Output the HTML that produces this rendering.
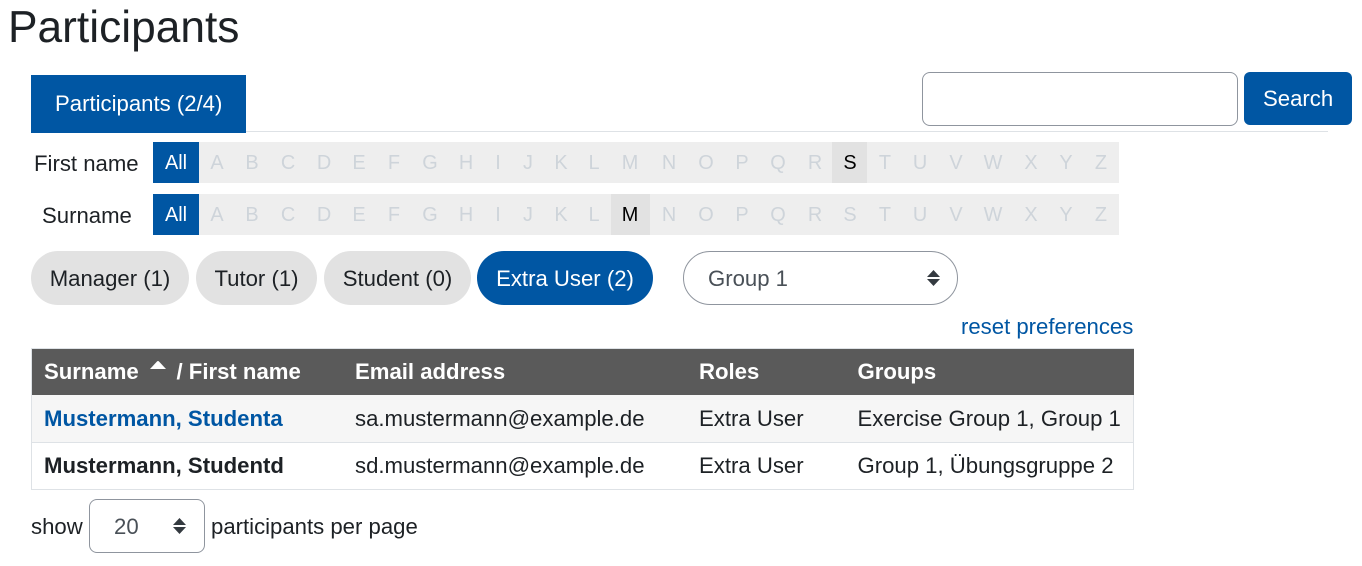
<!DOCTYPE html>
<html><head><meta charset="utf-8"><title>Participants</title>
<style>
html,body{margin:0;padding:0;background:#fff}
body{width:1362px;height:566px;position:relative;overflow:hidden;font-family:"Liberation Sans",Arial,sans-serif;font-size:22.15px;color:#1d2125}
.a{position:absolute;white-space:nowrap;line-height:24px}
.box{position:absolute;box-sizing:border-box}
.l{position:absolute;transform:translateX(-50%);font-size:19.9px;line-height:43px;color:#ced4da}
.pill{position:absolute;top:251px;height:54px;border-radius:27px;background:#e2e2e2;color:#1d2125;line-height:56px;text-align:center}
.th{font-weight:bold;color:#fff}
</style></head><body>
<div class="a" style="left:8px;top:4px;font-size:44.3px;line-height:48px">Participants</div>

<div class="box" style="left:31px;top:131px;width:1297px;height:1px;background:#dee2e6"></div>
<div class="box" style="left:31px;top:75px;width:215px;height:58px;background:#0056a3"></div>
<div class="a" style="left:55px;top:92px;color:#fff">Participants (2/4)</div>

<div class="box" style="left:922px;top:72px;width:316px;height:54px;border:1px solid #8f959e;border-radius:8px;background:#fff"></div>
<div class="box" style="left:1244px;top:72px;width:108px;height:53px;background:#0056a3;border-radius:6px"></div>
<div class="a" style="left:1263px;top:87px;color:#fff">Search</div>

<div class="a" style="left:34px;top:152px">First name</div>
<div class="a" style="left:42px;top:204px">Surname</div>

<div class="box" style="left:153px;top:142px;width:966px;height:41px;background:#eee"></div>
<div class="box" style="left:153px;top:142px;width:46px;height:41px;background:#0056a3"></div>
<div class="box" style="left:832px;top:142px;width:35px;height:41px;background:#e2e2e2"></div>
<div class="box" style="left:153px;top:194px;width:966px;height:41px;background:#eee"></div>
<div class="box" style="left:153px;top:194px;width:46px;height:41px;background:#0056a3"></div>
<div class="box" style="left:611px;top:194px;width:39px;height:41px;background:#e2e2e2"></div>

<div style="position:absolute;left:0;top:142px;width:1362px;height:41px">
<span class="l" style="left:176px;color:#fff">All</span><span class="l" style="left:217px">A</span><span class="l" style="left:252px">B</span><span class="l" style="left:288px">C</span><span class="l" style="left:324px">D</span><span class="l" style="left:359px">E</span><span class="l" style="left:394px">F</span><span class="l" style="left:430px">G</span><span class="l" style="left:466px">H</span><span class="l" style="left:498px">I</span><span class="l" style="left:528px">J</span><span class="l" style="left:561px">K</span><span class="l" style="left:594px">L</span><span class="l" style="left:630px">M</span><span class="l" style="left:669px">N</span><span class="l" style="left:706px">O</span><span class="l" style="left:742px">P</span><span class="l" style="left:778px">Q</span><span class="l" style="left:815px">R</span><span class="l" style="left:850px;color:#000">S</span><span class="l" style="left:885px">T</span><span class="l" style="left:920px">U</span><span class="l" style="left:956px">V</span><span class="l" style="left:993px">W</span><span class="l" style="left:1031px">X</span><span class="l" style="left:1066px">Y</span><span class="l" style="left:1101px">Z</span>
</div>
<div style="position:absolute;left:0;top:194px;width:1362px;height:41px">
<span class="l" style="left:176px;color:#fff">All</span><span class="l" style="left:217px">A</span><span class="l" style="left:252px">B</span><span class="l" style="left:288px">C</span><span class="l" style="left:324px">D</span><span class="l" style="left:359px">E</span><span class="l" style="left:394px">F</span><span class="l" style="left:430px">G</span><span class="l" style="left:466px">H</span><span class="l" style="left:498px">I</span><span class="l" style="left:528px">J</span><span class="l" style="left:561px">K</span><span class="l" style="left:594px">L</span><span class="l" style="left:630px;color:#000">M</span><span class="l" style="left:669px">N</span><span class="l" style="left:706px">O</span><span class="l" style="left:742px">P</span><span class="l" style="left:778px">Q</span><span class="l" style="left:815px">R</span><span class="l" style="left:850px">S</span><span class="l" style="left:885px">T</span><span class="l" style="left:920px">U</span><span class="l" style="left:956px">V</span><span class="l" style="left:993px">W</span><span class="l" style="left:1031px">X</span><span class="l" style="left:1066px">Y</span><span class="l" style="left:1101px">Z</span>
</div>

<div class="pill" style="left:31px;width:158px">Manager (1)</div>
<div class="pill" style="left:196px;width:121px">Tutor (1)</div>
<div class="pill" style="left:324px;width:147px">Student (0)</div>
<div class="pill" style="left:477px;width:176px;background:#0056a3;color:#fff">Extra User (2)</div>

<div class="box" style="left:683px;top:251px;width:275px;height:54px;border:1px solid #8f959e;border-radius:27px;background:#fff"></div>
<div class="a" style="left:708px;top:267px;color:#495057">Group 1</div>
<svg style="position:absolute;left:926px;top:269px" width="15" height="18" viewBox="0 0 15 18"><path d="M1 8L7.5 1L14 8Z M1 10L7.5 17L14 10Z" fill="#343a40"/></svg>

<div class="a" style="left:961px;top:315px;color:#0056a3">reset preferences</div>

<div class="box" style="left:31px;top:348px;width:1103px;height:142px;border:1px solid #dee2e6;background:#fff"></div>
<div class="box" style="left:32px;top:349px;width:1102px;height:46px;background:#5a5a5a"></div>
<div class="box" style="left:32px;top:395px;width:1101px;height:47px;background:#f6f6f6"></div>
<div class="box" style="left:32px;top:442px;width:1101px;height:1px;background:#dee2e6"></div>

<div class="a th" style="left:44px;top:360px">Surname</div>
<svg style="position:absolute;left:149px;top:360px" width="18" height="10" viewBox="0 0 18 10"><path d="M1 9L8 1.5Q9 .5 10 1.5L17 9Z" fill="#fff"/></svg>
<div class="a th" style="left:176.5px;top:360px">/ First name</div>
<div class="a th" style="left:355px;top:360px">Email address</div>
<div class="a th" style="left:699px;top:360px">Roles</div>
<div class="a th" style="left:857.5px;top:360px">Groups</div>

<div class="a" style="left:44px;top:407px;font-weight:bold;color:#0056a3">Mustermann, Studenta</div>
<div class="a" style="left:355px;top:407px">sa.mustermann@example.de</div>
<div class="a" style="left:699px;top:407px">Extra User</div>
<div class="a" style="left:857.5px;top:407px">Exercise Group 1, Group 1</div>

<div class="a" style="left:44px;top:454px;font-weight:bold">Mustermann, Studentd</div>
<div class="a" style="left:355px;top:454px">sd.mustermann@example.de</div>
<div class="a" style="left:699px;top:454px">Extra User</div>
<div class="a" style="left:857.5px;top:454px">Group 1, Übungsgruppe 2</div>

<div class="a" style="left:31px;top:515px">show</div>
<div class="box" style="left:89px;top:499px;width:116px;height:54px;border:1px solid #8f959e;border-radius:8px;background:#fff"></div>
<div class="a" style="left:114px;top:515px;color:#495057">20</div>
<svg style="position:absolute;left:172px;top:517px" width="15" height="18" viewBox="0 0 15 18"><path d="M1 8L7.5 1L14 8Z M1 10L7.5 17L14 10Z" fill="#343a40"/></svg>
<div class="a" style="left:211px;top:515px">participants per page</div>
</body></html>
